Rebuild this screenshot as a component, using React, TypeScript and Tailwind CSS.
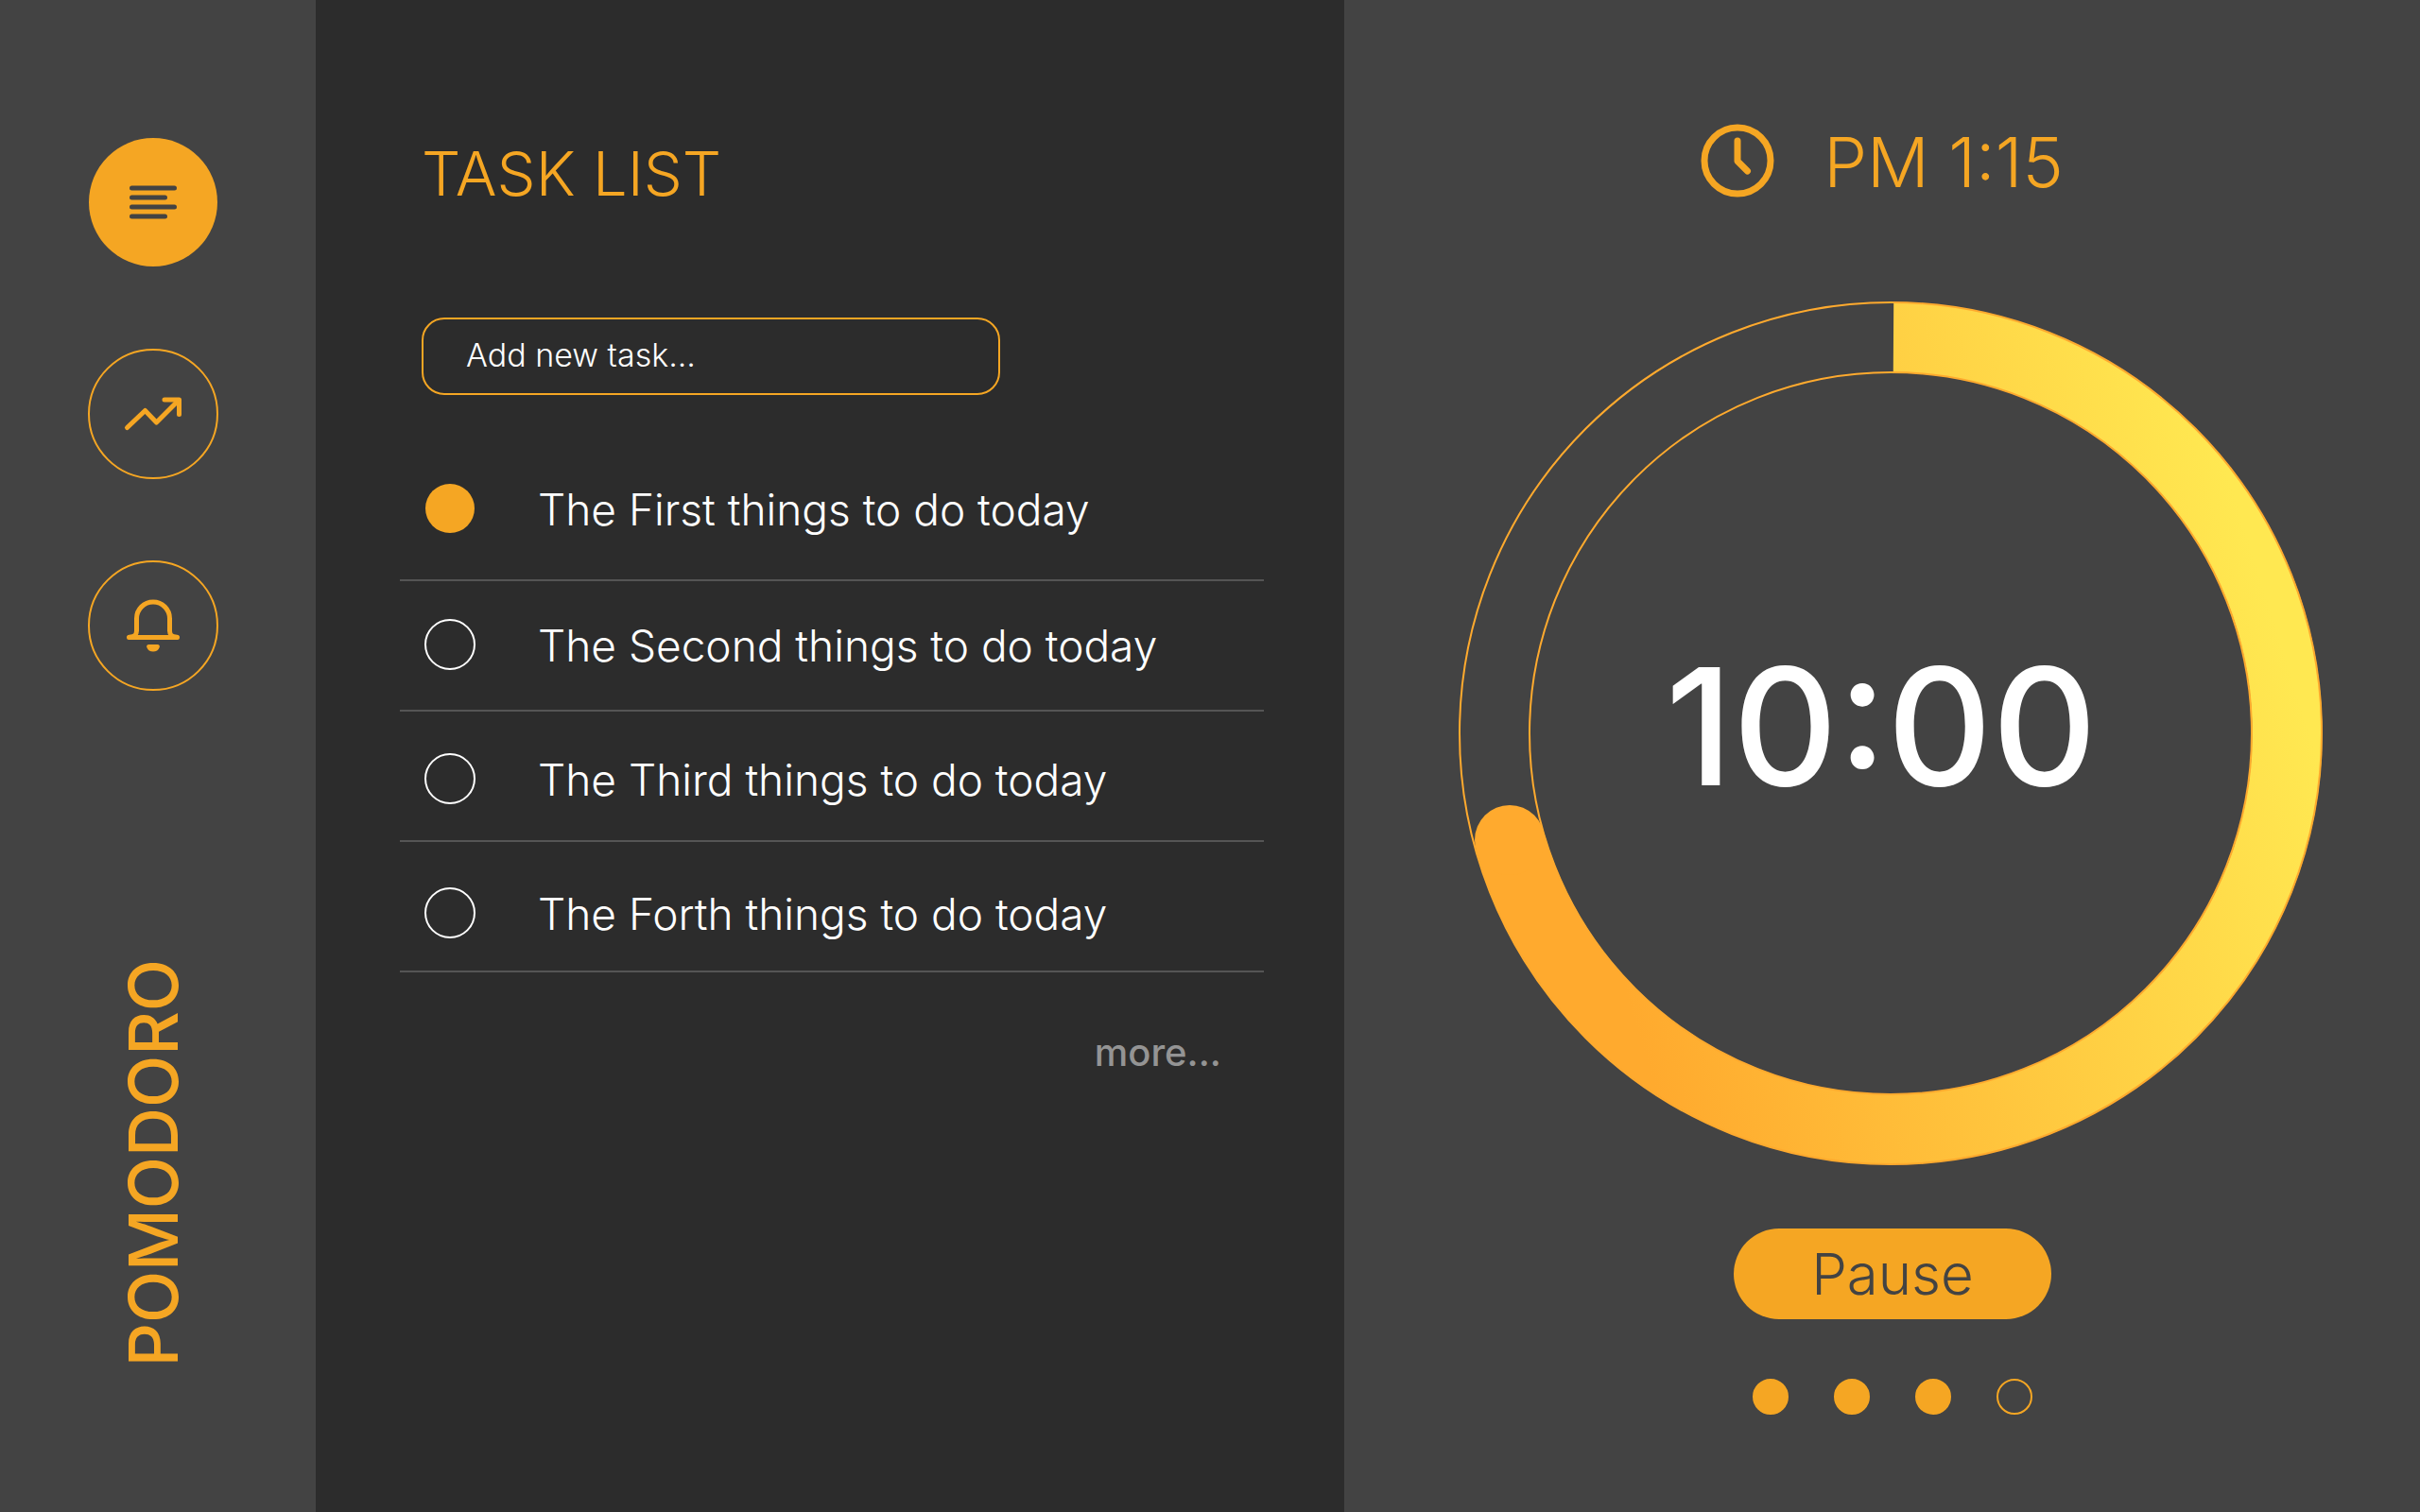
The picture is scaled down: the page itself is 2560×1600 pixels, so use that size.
import { useId, useState } from "react";

type Task = { title: string; done: boolean; padding: string };

const initialTasks: Task[] = [
  { title: "The First things to do today", done: true, padding: "pt-[34px] pb-[48px]" },
  { title: "The Second things to do today", done: false, padding: "pt-[40px] pb-[42px]" },
  { title: "The Third things to do today", done: false, padding: "pt-[44px] pb-[38px]" },
  { title: "The Forth things to do today", done: false, padding: "pt-[48px] pb-[34px]" },
];

const sessions = [true, true, true, false];

function ListIcon() {
  return (
    <svg className="size-[64px]" viewBox="0 0 64 64" fill="none" stroke="#434343" strokeWidth="5" strokeLinecap="round" aria-hidden="true">
      <path d="M9.5 17H54.5M9.5 27H44.5M9.5 37H54.5M9.5 47H44.5" />
    </svg>
  );
}

function TrendIcon() {
  return (
    <svg className="size-[64px]" viewBox="0 0 64 64" fill="none" stroke="#F5A623" strokeWidth="5" strokeLinecap="round" strokeLinejoin="round" aria-hidden="true">
      <path d="M4.5 46.5L23.5 28.5L35.5 41L58 18.5" />
      <path d="M44 17H59.5V32.5" />
      <path d="M53 17H59.5V24Z" fill="#F5A623" stroke="none" />
    </svg>
  );
}

function BellIcon() {
  return (
    <svg className="size-[64px]" viewBox="0 0 64 64" fill="none" stroke="#F5A623" strokeWidth="5" strokeLinecap="round" strokeLinejoin="round" aria-hidden="true">
      <path d="M6.5 44.5H57.5" />
      <path d="M7 44.2C12.5 43.5 14.5 42 14.5 37.5V24.5A17.5 17.5 0 0 1 49.5 24.5V37.5C49.5 42 51.5 43.5 57 44.2" />
      <path d="M27.5 52H36.5C38.5 52 39.3 53.5 38.7 55C37.7 58 35.2 59.6 32 59.6C28.8 59.6 26.3 58 25.3 55C24.7 53.5 25.5 52 27.5 52Z" fill="#F5A623" stroke="none" />
    </svg>
  );
}

function ClockIcon() {
  return (
    <svg className="size-[78px] shrink-0" viewBox="0 0 78 78" fill="none" stroke="#F5A623" strokeWidth="7" strokeLinecap="round" strokeLinejoin="round" aria-hidden="true">
      <circle cx="39" cy="39" r="35" />
      <path d="M39 18V39.5L49.5 50" />
    </svg>
  );
}

function TimerRing() {
  const gradient = useId();
  return (
    <svg className="h-auto w-full [grid-area:1/1]" viewBox="0 0 916 916" fill="none" aria-hidden="true">
      <defs>
        <linearGradient id={gradient} gradientUnits="userSpaceOnUse" x1="192" y1="778" x2="929" y2="546">
          <stop offset="0" stopColor="#FFAA2E" />
          <stop offset="1" stopColor="#FFE851" />
        </linearGradient>
      </defs>
      <path d="M461 39A419 419 0 1 1 55 571" stroke={`url(#${gradient})`} strokeWidth="74" />
      <circle cx="55" cy="571" r="37" fill="#FFAA2E" />
      <circle cx="458" cy="458" r="456" stroke="#FFAA2E" strokeWidth="2" />
      <circle cx="458" cy="458" r="382" stroke="#FFAA2E" strokeWidth="2" />
    </svg>
  );
}

export default function App() {
  const [tasks, setTasks] = useState(initialTasks);
  const toggle = (index: number) =>
    setTasks(tasks.map((t, i) => (i === index ? { ...t, done: !t.done } : t)));

  return (
    <div className="grid min-h-screen grid-cols-[334fr_1088fr_1138fr] bg-[#434343] font-['Inter',sans-serif] text-[#F5A623]">
      <aside className="flex flex-col items-center pt-[145px] pr-[10px] pb-[154px]">
        <nav className="flex flex-col gap-[86px]" aria-label="Main">
          <button type="button" aria-label="Tasks" className="flex size-[138px] items-center justify-center rounded-full border border-transparent bg-[#F5A623] bg-clip-padding">
            <ListIcon />
          </button>
          <button type="button" aria-label="Statistics" className="flex size-[138px] items-center justify-center rounded-full border-2 border-[#F5A623]">
            <TrendIcon />
          </button>
          <button type="button" aria-label="Notifications" className="flex size-[138px] items-center justify-center rounded-full border-2 border-[#F5A623]">
            <BellIcon />
          </button>
        </nav>
        <p className="mt-auto rotate-180 text-[72px] leading-[80px] font-medium [writing-mode:vertical-rl]">POMODORO</p>
      </aside>

      <main className="bg-[#2C2C2C] pt-[152px] pr-[85px] pl-[89px]">
        <div className="pl-[23px]">
          <h1 className="text-[65px] leading-[64px] font-light">TASK LIST</h1>
          <input
            type="text"
            aria-label="Add new task"
            placeholder="Add new task..."
            className="mt-[120px] block h-[82px] w-[612px] max-w-full rounded-[24px] border-2 border-[#F5A623] bg-transparent px-[45px] pb-[3px] text-[34px] font-light text-white outline-none placeholder:text-white"
          />
        </div>
        <ul className="mt-[59px]">
          {tasks.map((task, i) => (
            <li key={task.title} className={`border-b-2 border-[#555555] ${task.padding}`}>
              <label className="flex items-center gap-[66px] pl-[26px]">
                <input
                  type="checkbox"
                  checked={task.done}
                  onChange={() => toggle(i)}
                  className="size-[54px] shrink-0 appearance-none rounded-full border-2 border-white checked:border checked:border-transparent checked:bg-[#F5A623] checked:bg-clip-padding"
                />
                <span className="pt-[2px] text-[46px] leading-[52px] font-light whitespace-nowrap text-white">{task.title}</span>
              </label>
            </li>
          ))}
        </ul>
        <div className="mt-[61px] flex justify-end pr-[45px]">
          <a href="#more" className="text-[40px] leading-[48px] font-medium text-[#949494]">more...</a>
        </div>
      </main>

      <section className="flex flex-col items-center pt-[131px]" aria-label="Timer">
        <header className="flex items-center gap-[52px]">
          <ClockIcon />
          <time dateTime="13:15" className="pt-[4px] text-[73px] leading-[74px] font-light">PM 1:15</time>
        </header>
        <div className="mt-[109px] flex w-full justify-center pl-[18px]">
          <div className="grid w-[916px] max-w-full place-items-center">
            <TimerRing />
            <p role="timer" className="pr-5 pb-4 text-[172px] leading-[180px] font-medium text-white [grid-area:1/1]">10:00</p>
          </div>
        </div>
        <div className="mt-[66px] flex flex-col items-center pl-[22px]">
          <button type="button" className="h-[96px] w-[336px] rounded-full bg-[#F5A623] text-[60px] font-light text-[#434343]">
            Pause
          </button>
          <ol className="mt-[63px] flex gap-12" aria-label="Sessions">
            {sessions.map((done, i) => (
              <li
                key={i}
                aria-label={done ? "Finished" : "Open"}
                className={`size-[38px] rounded-full border-2 border-[#F5A623] ${done ? "bg-[#F5A623]" : ""}`}
              />
            ))}
          </ol>
        </div>
      </section>
    </div>
  );
}
